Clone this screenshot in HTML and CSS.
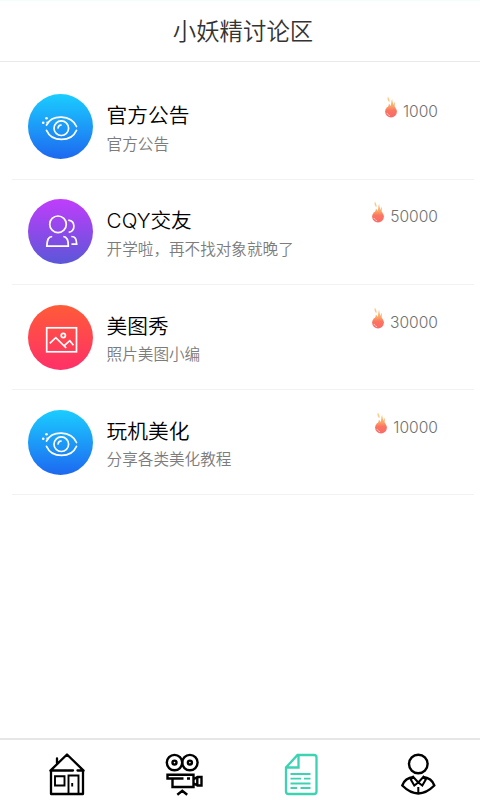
FILE: index.html
```html
<!DOCTYPE html>
<html lang="zh-CN">
<head>
<meta charset="utf-8">
<title>小妖精讨论区</title>
<link rel="stylesheet" href="styles.css">
</head>
<body>
<svg class="defs" aria-hidden="true">
  <defs>
    <linearGradient id="fire" gradientUnits="userSpaceOnUse" x1="0" y1="2" x2="0" y2="21">
      <stop offset="0" stop-color="#fbd08a"/>
      <stop offset=".45" stop-color="#fba265"/>
      <stop offset=".65" stop-color="#fb7662"/>
      <stop offset="1" stop-color="#fa6a68"/>
    </linearGradient>
    <symbol id="flame" viewBox="0 0 14 23">
      <circle fill="url(#fire)" cx="7" cy="15.600" r="5.900"/>
      <path fill="url(#fire)" d="M3.500 12C4.500 10.500 4.800 9 4.900 7.600C6 8.500 6.300 9.600 6.300 10.600C7.800 8.500 6.600 5.500 8.200 2.800C8.300 5.800 9.200 6.800 9.300 9L10.800 5.500C11 8.500 10 10 11.500 12.500Z"/>
      <path fill="#fbc980" d="M4 .2C4.200 2 6.500 3.700 5.300 6.300C3.700 4.800 3 2.300 4 .2Z"/>
      <path fill="none" stroke="#fff" stroke-width=".7" stroke-dasharray="1.600 .8" d="M3 17Q4 19.200 6.300 19.800"/>
    </symbol>
    <symbol id="eye" viewBox="0 0 65 65">
      <g fill="none" stroke="#fff" stroke-width="1.700" stroke-linecap="round">
        <path d="M18.500 31C24 20.200 43 20.200 48.500 32.500M18.500 36.300C24 48.500 43 48.500 48.500 36.300"/>
        <circle cx="33.300" cy="34.200" r="7.300"/>
        <path d="M30.100 34Q30.300 31.200 33 31"/>
      </g>
      <g fill="#fff"><circle cx="18.500" cy="24.300" r="1.300"/><circle cx="15.200" cy="28.800" r="1.300"/><circle cx="19.200" cy="28.300" r=".9"/></g>
    </symbol>
  </defs>
</svg>
<div class="app">
  <header class="header">小妖精讨论区</header>
  <main class="list">
    <section class="row">
      <svg class="avatar blue"><use href="#eye"/></svg>
      <div class="info"><h2>官方公告</h2><p>官方公告</p></div>
      <div class="heat"><svg><use href="#flame"/></svg><span>1000</span></div>
    </section>
    <section class="row">
      <svg class="avatar purple" viewBox="0 0 65 65" fill="none" stroke="#fff" stroke-width="1.700">
        <circle cx="30" cy="25.300" r="8.300"/>
        <path d="M24.200 37.500C20.500 37.800 19.300 40 18.800 47.200H40.300C40.500 40 38.800 37.800 35.300 37.500M40.300 21.200C47.700 22.200 47.700 32 40.700 33.300M43.300 37.500C47.300 37.600 48.300 39.500 48.700 45.200H43.500"/>
      </svg>
      <div class="info"><h2>CQY交友</h2><p>开学啦，再不找对象就晚了</p></div>
      <div class="heat"><svg><use href="#flame"/></svg><span>50000</span></div>
    </section>
    <section class="row">
      <svg class="avatar red" viewBox="0 0 65 65" fill="none" stroke="#fff" stroke-width="1.700">
        <rect x="18.700" y="22.800" width="29.800" height="24"/>
        <path d="M21.800 38.300L27.800 32.700L38.200 43M36.300 40.600L41.800 35.700L45.500 40.200"/>
        <circle cx="35.300" cy="30.500" r="2.100"/>
      </svg>
      <div class="info"><h2>美图秀</h2><p>照片美图小编</p></div>
      <div class="heat"><svg><use href="#flame"/></svg><span>30000</span></div>
    </section>
    <section class="row">
      <svg class="avatar blue"><use href="#eye"/></svg>
      <div class="info"><h2>玩机美化</h2><p>分享各类美化教程</p></div>
      <div class="heat"><svg><use href="#flame"/></svg><span>10000</span></div>
    </section>
  </main>
  <nav class="tabs">
    <a><svg viewBox="0 0 40 44" stroke-width="2.300">
      <path d="M3.400 18.600L20 2.500L36.600 18.600M4 18.500V42H36V18.500M4 18.500H26M30.500 18.500H36M10 11V6.500" stroke-linecap="round" stroke-linejoin="round"/>
      <path d="M8 24.200H17.500V33.500H8ZM21.500 42V23.500H31.500V42M25.200 31V34.500" stroke-width="1.900"/>
    </svg></a>
    <a><svg viewBox="0 0 40 44" stroke-width="2.400">
      <circle cx="10.500" cy="10.600" r="7.700"/><circle cx="25.900" cy="10.600" r="7.700"/>
      <circle cx="10.500" cy="10.600" r="2"/><circle cx="25.900" cy="10.600" r="2"/>
      <path d="M3.500 22.700H29.500V35H8.500V26.500H3.500ZM8.500 26.500H19.500M23 26.500H26M30 27L33.500 25H37.500V33.500H33.500L30 31.500M33.300 25V33.500M13.300 42.700L18.300 38.700L23.200 42.700"/>
    </svg></a>
    <a class="active"><svg viewBox="0 0 40 44" stroke-width="2.300">
      <path d="M16.500 3H33Q35.500 3 35.500 5.500V39.500Q35.500 42 33 42H7.500Q5 42 5 39.500V15.500ZM17.500 3V15.500H5.500"/>
      <path stroke-width="1.800" d="M9.500 22H29.500M9.500 26.600H20M23 26.600H29.500M9.500 31.500H29.500M9.500 36H16M19.500 36H29.500"/>
    </svg></a>
    <a><svg viewBox="0 0 40 44" stroke-width="2.400">
      <circle cx="19.300" cy="12" r="9.300"/>
      <path d="M14.800 25C8.800 25.500 4.800 29 3.300 33.500Q19.300 49.500 35.300 33.500C33.800 29 29.800 25.500 23.800 25"/>
      <path stroke-width="2" d="M14.800 24L11.800 27.500L15.300 33.500L19.300 30.500L23.300 33.500L26.800 27.500L23.800 24M14.300 25L19.300 30.500L24.300 25M19.300 35V41.500"/>
    </svg></a>
  </nav>
</div>
</body>
</html>
```
FILE: styles.css
```css
* { box-sizing: border-box; }
body {
  margin: 0;
  background: #fff;
  font-family: Inter, "Noto Sans CJK SC", sans-serif;
}
.defs { display: block; width: 0; height: 0; }
.app { display: flex; flex-direction: column; height: 800px; }
.header {
  height: 62px;
  border-top: 1px solid #effffa;
  border-bottom: 1px solid #e9e9e9;
  font-size: 23.4px;
  font-weight: 350;
  line-height: 62px;
  text-align: center;
  text-indent: 6px;
  color: #333;
}
.list { flex: 1; padding: 12.500px 6px 0 12px; }
.row {
  display: flex;
  height: 105.200px;
  padding: 19.700px 36px 0 16.300px;
  border-bottom: 1px solid #f2f2f2;
}
.avatar { width: 65px; height: 65px; border-radius: 50%; }
.blue { background: linear-gradient(#1bcdff, #1d68f0); }
.purple { background: linear-gradient(#c03dfb, #5b57d8); }
.red { background: linear-gradient(#ff5b38, #ff3068); }
.info { flex: 1; margin-left: 13.300px; }
h2 {
  margin: 7px 0 0;
  font-size: 20.700px;
  font-weight: 350;
  line-height: 30px;
  color: #000;
}
p {
  margin: 1.500px 0 0;
  font-size: 15.600px;
  font-weight: 350;
  line-height: 24px;
  color: #7c7c7c;
}
.heat {
  display: flex;
  height: 25px;
  gap: 5px;
  font-size: 15.600px;
  font-weight: 350;
  line-height: 36px;
  color: #707070;
}
.heat svg { width: 14px; height: 23px; margin-top: 2px; }
.tabs {
  display: flex;
  height: 62px;
  padding-left: 8px;
  border-top: 2px solid #e6e6e6;
}
.tabs a { width: 117.300px; padding-top: 12px; text-align: center; color: #000; }
.tabs .active { color: #3cd3b2; }
.tabs svg { width: 40px; height: 44px; fill: none; stroke: currentColor; }
```
